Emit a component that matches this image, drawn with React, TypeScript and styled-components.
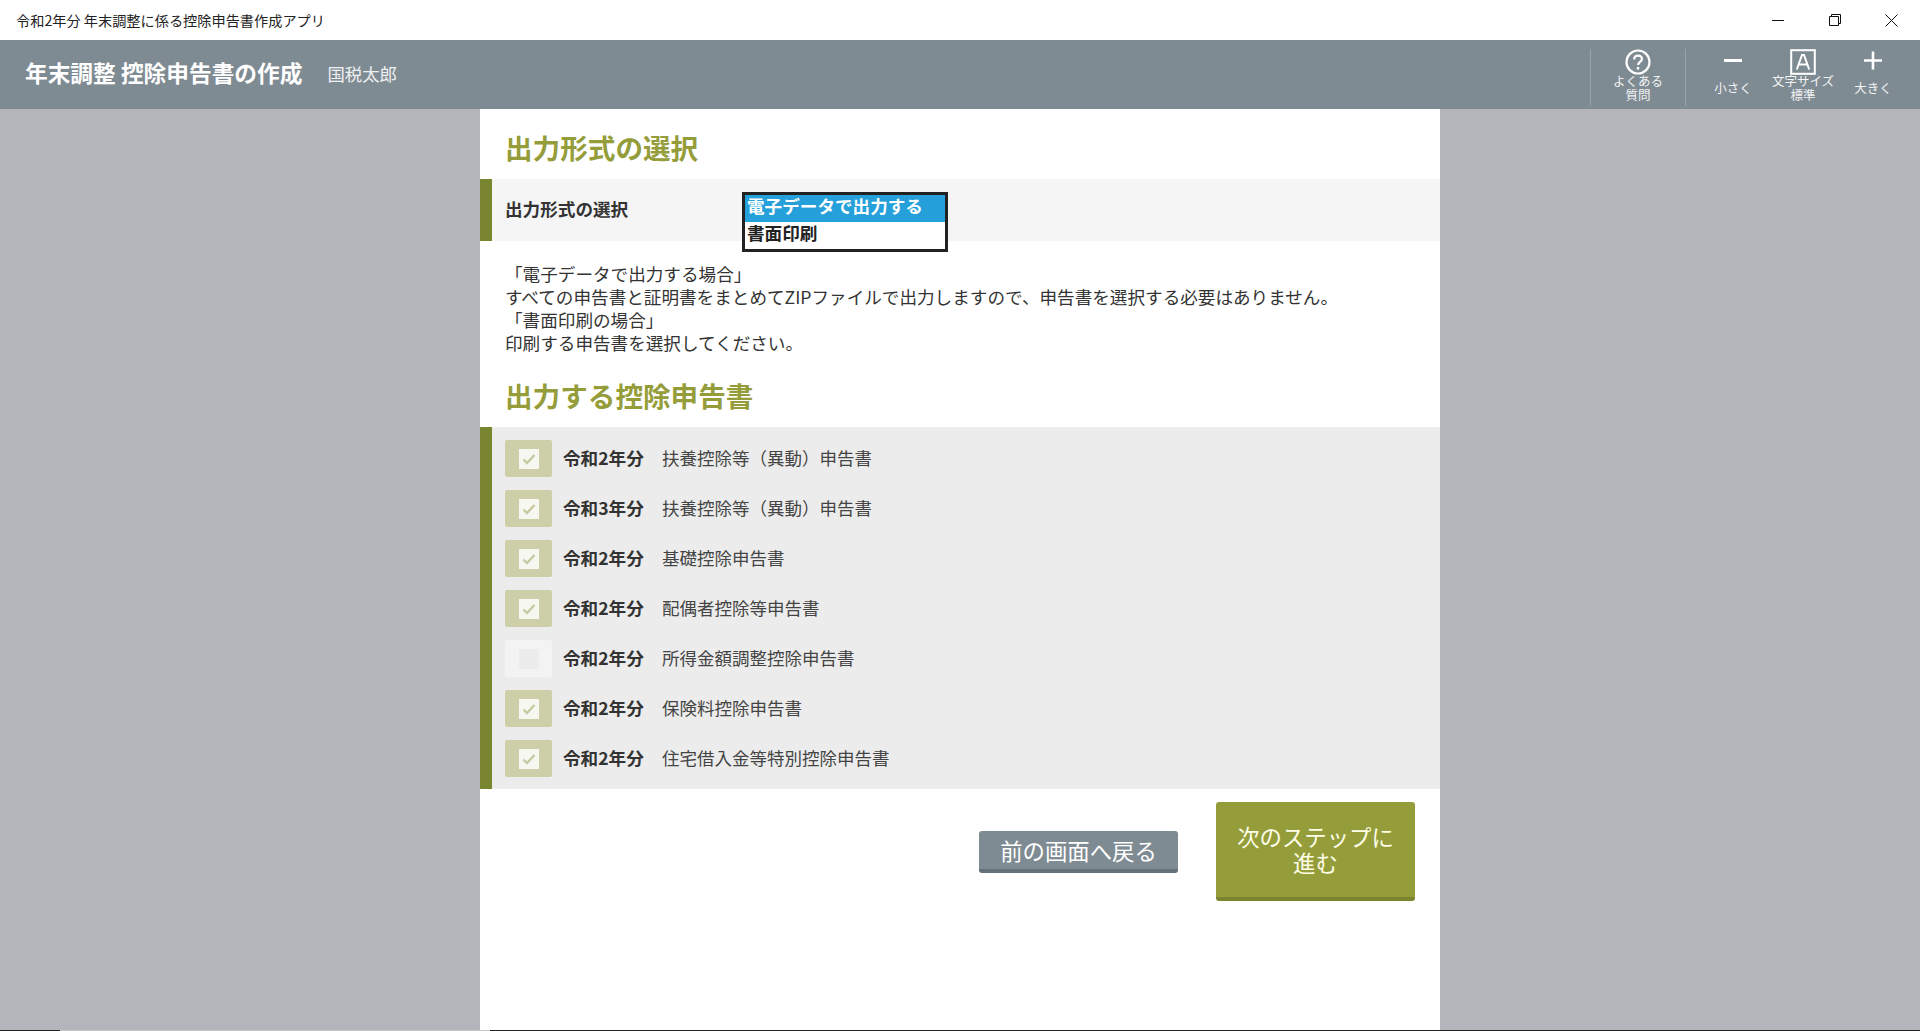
import React from "react";
import styled, { createGlobalStyle } from "styled-components";

const FONT = `"Noto Sans CJK JP", "Noto Sans", sans-serif`;

const Global = createGlobalStyle`
  html, body { margin: 0; padding: 0; height: 100%; overflow: hidden; }
  body { font-family: ${FONT}; color: #333; background: #b4b5ba; }
  #root { height: 100%; }
  * { box-sizing: border-box; }
`;

const Window = styled.div`
  height: 1031px;
  display: flex;
  flex-direction: column;
  overflow: hidden;
`;

const TitleBar = styled.div`
  height: 40px;
  flex: none;
  background: #fff;
  display: flex;
  align-items: center;
  justify-content: space-between;
  padding-left: 16px;
  font-size: 14.2px;
  line-height: 18px;
  color: #222;
`;

const WindowButtons = styled.div`
  display: flex;
  height: 40px;
`;

const WindowButton = styled.div`
  width: 57px;
  display: flex;
  align-items: center;
  justify-content: center;
`;

const Header = styled.header`
  height: 69px;
  flex: none;
  background: #7f8b93;
  display: flex;
  align-items: center;
  color: #fff;
  padding-left: 25px;
`;

const AppName = styled.div`
  font-size: 22.7px;
  font-weight: 700;
  line-height: 30px;
  white-space: pre;
  margin-top: -4px;
`;

const UserName = styled.div`
  font-size: 17.4px;
  margin: -3px 0 0 25px;
  color: #eef0f1;
`;

const Tools = styled.div`
  margin-left: auto;
  display: flex;
  align-items: stretch;
  height: 57px;
  margin-top: 6px;
`;

const Divider = styled.div<{ $after: number }>`
  width: 1px;
  background: #9aa3aa;
  margin-right: ${(p) => p.$after}px;
`;

const Tool = styled.div<{ $w: number }>`
  width: ${(p) => p.$w}px;
  display: flex;
  flex-direction: column;
  align-items: center;
  font-size: 12.5px;
  line-height: 13.5px;
  text-align: center;
  color: #f2f3f4;
  white-space: nowrap;
`;

const ToolIcon = styled.div<{ $h: number }>`
  height: ${(p) => p.$h}px;
  flex: none;
  display: flex;
  align-items: flex-start;
  justify-content: center;
`;

const EdgeSpacer = styled.div`
  width: 26px;
`;

const Main = styled.main`
  flex: 1;
  display: flex;
  justify-content: center;
  min-height: 0;
`;

const Panel = styled.div`
  width: 960px;
  background: #fff;
  display: flex;
  flex-direction: column;
`;

const Heading = styled.h2<{ $top: number; $h: number }>`
  margin: 0;
  height: ${(p) => p.$h}px;
  padding: ${(p) => p.$top}px 0 0 25px;
  font-size: 27.6px;
  line-height: 38px;
  font-weight: 700;
  color: #959d3a;
`;

const FormatRow = styled.div`
  height: 62px;
  background: #f5f5f5;
  border-left: 12px solid #7a8530;
  display: flex;
  align-items: flex-start;
  padding-left: 13px;
`;

const RowLabel = styled.div`
  width: 237px;
  height: 60px;
  font-size: 17.6px;
  line-height: 60px;
  font-weight: 700;
  color: #333;
`;

const ListBox = styled.div`
  width: 206px;
  height: 60px;
  margin-top: 13px;
  border: 3px solid #222;
  background: #fff;
  display: flex;
  flex-direction: column;
`;

const ListOption = styled.div<{ $on?: boolean }>`
  height: 27px;
  flex: none;
  padding-left: 2px;
  font-size: 17.6px;
  font-weight: 700;
  line-height: 22px;
  background: ${(p) => (p.$on ? "#26a0da" : "#fff")};
  color: ${(p) => (p.$on ? "#fff" : "#222")};
`;

const Notes = styled.div`
  padding: 21px 0 0 25px;
  height: 115px;
  font-size: 17.6px;
  line-height: 23px;
  color: #333;
`;

const Note = styled.div`
  white-space: nowrap;
`;

const DocList = styled.div`
  height: 362px;
  background: #ececec;
  border-left: 12px solid #7a8530;
  padding: 13px 0 0 13px;
  display: flex;
  flex-direction: column;
  gap: 13px;
`;

const DocRow = styled.div`
  height: 37px;
  display: flex;
  align-items: center;
`;

const Check = styled.div<{ $on: boolean }>`
  width: 47px;
  height: 37px;
  border-radius: 2px;
  background: ${(p) => (p.$on ? "#cdcfa8" : "#f3f3f3")};
  display: flex;
  align-items: center;
  justify-content: center;
`;

const CheckInner = styled.div<{ $on: boolean }>`
  width: 20px;
  height: 20px;
  background: ${(p) => (p.$on ? "#f7f7f2" : "#ececec")};
  display: flex;
  align-items: center;
  justify-content: center;
`;

const DocYear = styled.span`
  margin: -2px 0 0 11px;
  width: 99px;
  font-size: 17.6px;
  font-weight: 700;
  color: #333;
`;

const DocName = styled.span`
  margin-top: -2px;
  font-size: 17.5px;
  color: #444;
`;

const Actions = styled.div`
  padding: 13px 25px 0 0;
  display: flex;
  justify-content: flex-end;
  align-items: center;
  gap: 38px;
`;

const BaseButton = styled.button`
  border: 0;
  padding: 0;
  width: 199px;
  border-radius: 3px;
  font-family: ${FONT};
  font-size: 22.4px;
  line-height: 26px;
  color: #fff;
`;

const BackButton = styled(BaseButton)`
  height: 42px;
  background: #7f8b93;
  border-bottom: 4px solid #64707a;
`;

const NextButton = styled(BaseButton)`
  height: 99px;
  padding-bottom: 2px;
  background: #959d3a;
  border-bottom: 4px solid #7a8530;
  color: #fdfde8;
`;

const EdgeLine = styled.div`
  height: 1px;
  flex: none;
  display: flex;
`;

const EdgePart = styled.div<{ $w?: number; $dark?: boolean }>`
  ${(p) => (p.$w ? `width: ${p.$w}px;` : "flex: 1;")}
  background: ${(p) => (p.$dark ? "#222" : "#c4c4c4")};
`;

const Mark = () => (
  <svg width="14" height="12" viewBox="0 0 14 12" fill="none">
    <path d="M1.5 6.5 L5 10 L12.5 2" stroke="#c6c9a0" strokeWidth="2.4" />
  </svg>
);

const docs: [string, string, boolean][] = [
  ["令和2年分", "扶養控除等（異動）申告書", true],
  ["令和3年分", "扶養控除等（異動）申告書", true],
  ["令和2年分", "基礎控除申告書", true],
  ["令和2年分", "配偶者控除等申告書", true],
  ["令和2年分", "所得金額調整控除申告書", false],
  ["令和2年分", "保険料控除申告書", true],
  ["令和2年分", "住宅借入金等特別控除申告書", true],
];

export default function App() {
  return (
    <Window>
      <Global />
      <TitleBar>
        <span>令和2年分 年末調整に係る控除申告書作成アプリ</span>
        <WindowButtons>
          <WindowButton>
            <svg width="12" height="12" viewBox="0 0 12 12"><path d="M0 6.5H12" stroke="#111" strokeWidth="1" /></svg>
          </WindowButton>
          <WindowButton>
            <svg width="12" height="12" viewBox="0 0 12 12" fill="none">
              <path d="M.5 2.5h9v9h-9z M2.5 2.5V.5h9v9h-2" stroke="#111" strokeWidth="1" />
            </svg>
          </WindowButton>
          <WindowButton>
            <svg width="13" height="13" viewBox="0 0 13 13"><path d="M.5.5l12 12M12.5.5l-12 12" stroke="#111" strokeWidth="1" /></svg>
          </WindowButton>
        </WindowButtons>
      </TitleBar>
      <Header>
        <AppName>{"年末調整 控除申告書の作成"}</AppName>
        <UserName>国税太郎</UserName>
        <Tools>
          <Divider $after={0} />
          <Tool $w={94}>
            <ToolIcon $h={25}>
              <svg width="26" height="26" viewBox="0 0 26 26" fill="none">
                <circle cx="13" cy="13" r="11.5" stroke="#fff" strokeWidth="2.2" />
                <path d="M9.2 10.4c0-2.3 1.7-3.8 3.9-3.8s3.8 1.4 3.8 3.4c0 2.9-3.8 3-3.8 6" stroke="#fff" strokeWidth="2.2" />
                <rect x="11.8" y="18" width="2.4" height="2.6" fill="#fff" />
              </svg>
            </ToolIcon>
            よくある<br />質問
          </Tool>
          <Divider $after={26} />
          <Tool $w={42}>
            <ToolIcon $h={32}>
              <svg width="20" height="24" viewBox="0 0 20 24"><rect x="1" y="10" width="18" height="3" fill="#fff" /></svg>
            </ToolIcon>
            小さく
          </Tool>
          <Tool $w={98}>
            <ToolIcon $h={25}>
              <svg width="26" height="26" viewBox="0 0 26 26" fill="none">
                <rect x="1.2" y="1.2" width="23.6" height="23.6" stroke="#fff" strokeWidth="2" />
                <path d="M6.8 20.5 12 6h2l5.2 14.5M8.8 15.6h8.4" stroke="#fff" strokeWidth="2" />
              </svg>
            </ToolIcon>
            文字サイズ<br />標準
          </Tool>
          <Tool $w={42}>
            <ToolIcon $h={32}>
              <svg width="20" height="24" viewBox="0 0 20 24"><path d="M1 11.5H19M10 2.5V20.5" stroke="#fff" strokeWidth="2.6" /></svg>
            </ToolIcon>
            大きく
          </Tool>
          <EdgeSpacer />
        </Tools>
      </Header>
      <Main>
        <Panel>
          <Heading $top={19} $h={70}>出力形式の選択</Heading>
          <FormatRow>
            <RowLabel>出力形式の選択</RowLabel>
            <ListBox>
              <ListOption $on>電子データで出力する</ListOption>
              <ListOption>書面印刷</ListOption>
            </ListBox>
          </FormatRow>
          <Notes>
            <Note>「電子データで出力する場合」</Note>
            <Note>すべての申告書と証明書をまとめてZIPファイルで出力しますので、申告書を選択する必要はありません。</Note>
            <Note>「書面印刷の場合」</Note>
            <Note>印刷する申告書を選択してください。</Note>
          </Notes>
          <Heading $top={20} $h={71}>出力する控除申告書</Heading>
          <DocList>
            {docs.map(([year, name, on], i) => (
              <DocRow key={i}>
                <Check $on={on}>
                  <CheckInner $on={on}>{on && <Mark />}</CheckInner>
                </Check>
                <DocYear>{year}</DocYear>
                <DocName>{name}</DocName>
              </DocRow>
            ))}
          </DocList>
          <Actions>
            <BackButton>前の画面へ戻る</BackButton>
            <NextButton>次のステップに<br />進む</NextButton>
          </Actions>
        </Panel>
      </Main>
      <EdgeLine>
        <EdgePart $w={60} $dark />
        <EdgePart $w={430} />
        <EdgePart $dark />
      </EdgeLine>
    </Window>
  );
}
